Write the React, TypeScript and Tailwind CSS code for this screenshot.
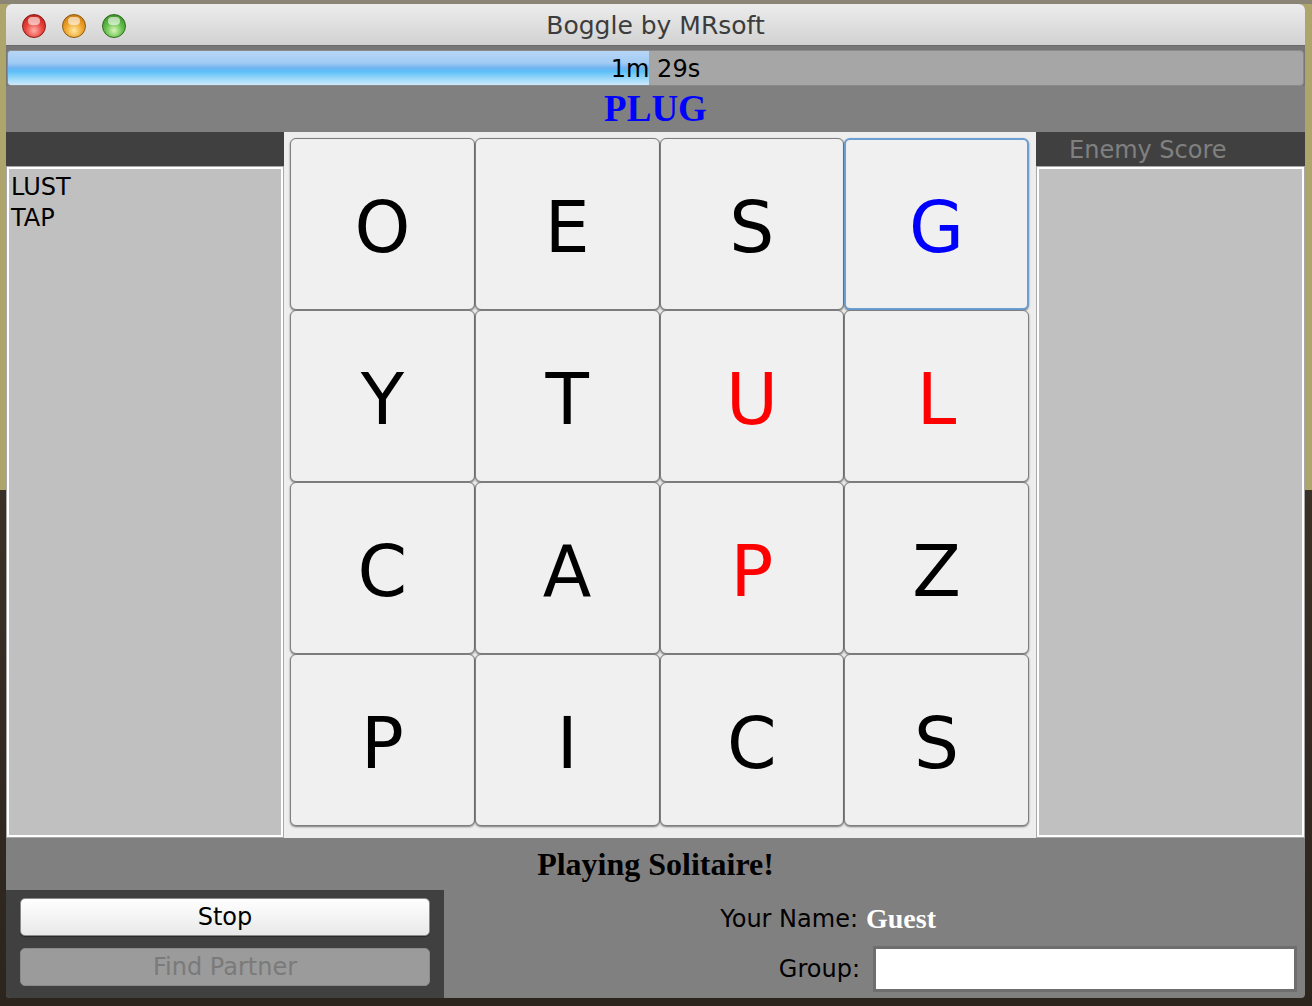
const board = [
  ['O', 'E', 'S', 'G'],
  ['Y', 'T', 'U', 'L'],
  ['C', 'A', 'P', 'Z'],
  ['P', 'I', 'C', 'S'],
];

// letters of the current word: G selected (blue), U L P in path (red)
const tone: Record<string, string> = {
  '0-3': 'text-[#0000ff]',
  '1-2': 'text-[#ff0000]',
  '1-3': 'text-[#ff0000]',
  '2-2': 'text-[#ff0000]',
};

function Light({ color }: { color: 'red' | 'amber' | 'green' }) {
  const fill = {
    red: 'bg-[radial-gradient(circle_at_50%_70%,#ffb0a8_0%,#e8443c_45%,#b01810_100%)] border-[#8a1a14]',
    amber: 'bg-[radial-gradient(circle_at_50%_70%,#ffe9a0_0%,#f0a42c_45%,#b86a08_100%)] border-[#8c5a10]',
    green: 'bg-[radial-gradient(circle_at_50%_70%,#d8f5b8_0%,#64c04c_45%,#2d7e1c_100%)] border-[#2e6a1e]',
  }[color];
  return (
    <div className={`relative h-[24px] w-[24px] rounded-full border ${fill}`}>
      <div className="absolute left-[5px] top-[2px] h-[8px] w-[12px] rounded-full bg-white/60" />
    </div>
  );
}

function Tile({ letter, className, selected }: { letter: string; className?: string; selected?: boolean }) {
  return (
    <div
      className={`flex items-center justify-center rounded-[6px] border bg-[#f0f0f0] shadow-[0_1px_2px_rgba(0,0,0,0.5)] ${
        selected ? 'border-[#6b9ed2] border-2' : 'border-[#7e7e7e]'
      }`}
    >
      <span className={`mt-[6px] text-[71px] leading-none ${className ?? 'text-black'}`}>{letter}</span>
    </div>
  );
}

export default function App() {
  return (
    <div
      className="flex h-[1006px] w-[1312px] flex-col overflow-hidden bg-[linear-gradient(to_bottom,#8c8576_0px,#8c8576_4px,#aea56c_4px,#aea56c_490px,#3a3126_490px,#2c251d_100%)] pt-[4px] pl-[6px] pr-[7px] text-[24px]"
      style={{ fontFamily: '"DejaVu Sans", "Open Sans", sans-serif' }}
    >
      <div className="flex h-[994px] flex-col overflow-hidden rounded-t-[6px] rounded-b-[4px] bg-[#808080]">
        {/* title bar */}
        <div className="relative flex h-[42px] shrink-0 items-center justify-center border-b border-[#6a6a6a] bg-[linear-gradient(to_bottom,#ececec,#d2d2d2)] pt-[3px]">
          <div className="absolute left-[16px] top-[10px] flex gap-[16px]">
            <Light color="red" />
            <Light color="amber" />
            <Light color="green" />
          </div>
          <span className="text-[25px] text-[#3c3c3c]">Boggle by MRsoft</span>
        </div>

        {/* timer */}
        <div className="shrink-0 bg-[#767676] px-[1px] pt-[4px]">
          <div className="relative flex h-[36px] items-center justify-center overflow-hidden rounded-[4px] border border-[#8a8a8a] bg-[#a6a6a6]">
            <div className="absolute inset-y-0 left-0 w-[641px] bg-[linear-gradient(to_bottom,#b6d6f6_0%,#a2cbf4_35%,#70b4f0_50%,#5cc0f8_60%,#a6dcfa_85%,#cdeafc_100%)]" />
            <span className="relative pt-[2px] text-black">1m 29s</span>
          </div>
        </div>

        {/* current word */}
        <div className="flex h-[46px] shrink-0 items-center justify-center bg-[#808080]">
          <span
            className="text-[37px] font-bold text-[#0000ff]"
            style={{ fontFamily: '"Liberation Serif", serif' }}
          >
            PLUG
          </span>
        </div>

        {/* main area */}
        <div className="flex h-[706px] shrink-0">
          <div className="flex w-[278px] flex-col">
            <div className="h-[34px] bg-[#404040]" />
            <div className="flex-1 border-[1px] border-[#a8a8a8]">
              <div className="h-full border-2 border-white bg-[#c0c0c0] pl-[2px] pt-[3px] leading-[31px] text-black">
                <div>LUST</div>
                <div>TAP</div>
              </div>
            </div>
          </div>

          <div className="grid w-[752px] grid-cols-4 grid-rows-4 bg-[#eeeeee] pt-[6px] pl-[6px] pr-[7px] pb-[12px]">
            {board.map((row, r) =>
              row.map((letter, c) => (
                <Tile
                  key={`${r}-${c}`}
                  letter={letter}
                  className={tone[`${r}-${c}`]}
                  selected={r === 0 && c === 3}
                />
              ))
            )}
          </div>

          <div className="flex flex-1 flex-col">
            <div className="flex h-[34px] items-center bg-[#404040] pl-[33px] pt-[2px] text-[#808080]">Enemy Score</div>
            <div className="flex-1 border-[1px] border-[#a8a8a8]">
              <div className="h-full border-2 border-white bg-[#c0c0c0]" />
            </div>
          </div>
        </div>

        {/* status */}
        <div className="flex h-[52px] shrink-0 items-center justify-center">
          <span
            className="text-[32px] font-bold text-black"
            style={{ fontFamily: '"Liberation Serif", serif' }}
          >
            Playing Solitaire!
          </span>
        </div>

        {/* controls */}
        <div className="flex flex-1">
          <div className="flex w-[438px] flex-col gap-[12px] bg-[#404040] pl-[14px] pr-[14px] pt-[8px]">
            <button className="h-[38px] rounded-[5px] border border-[#8a8a8a] bg-[linear-gradient(to_bottom,#ffffff,#f4f4f4_50%,#e8e8e8)] text-black shadow-[0_1px_1px_rgba(0,0,0,0.4)]">
              Stop
            </button>
            <button
              disabled
              className="h-[38px] rounded-[5px] border border-[#8a8a8a] bg-[#9b9b9b] text-[#7a7a7a]"
            >
              Find Partner
            </button>
          </div>

          <div className="flex flex-1 flex-col pt-[12px] pr-[8px]">
            <div className="flex h-[33px] items-center">
              <span className="w-[414px] text-right text-black">Your Name:</span>
              <span
                className="ml-[8px] text-[28px] font-bold text-white"
                style={{ fontFamily: '"Liberation Serif", serif' }}
              >
                Guest
              </span>
            </div>
            <div className="mt-[11px] flex items-center">
              <span className="w-[416px] text-right text-black">Group:</span>
              <div className="ml-[13px] h-[46px] flex-1 border-[3px] border-[#6e6e6e] bg-white" />
            </div>
          </div>
        </div>
      </div>
    </div>
  );
}
